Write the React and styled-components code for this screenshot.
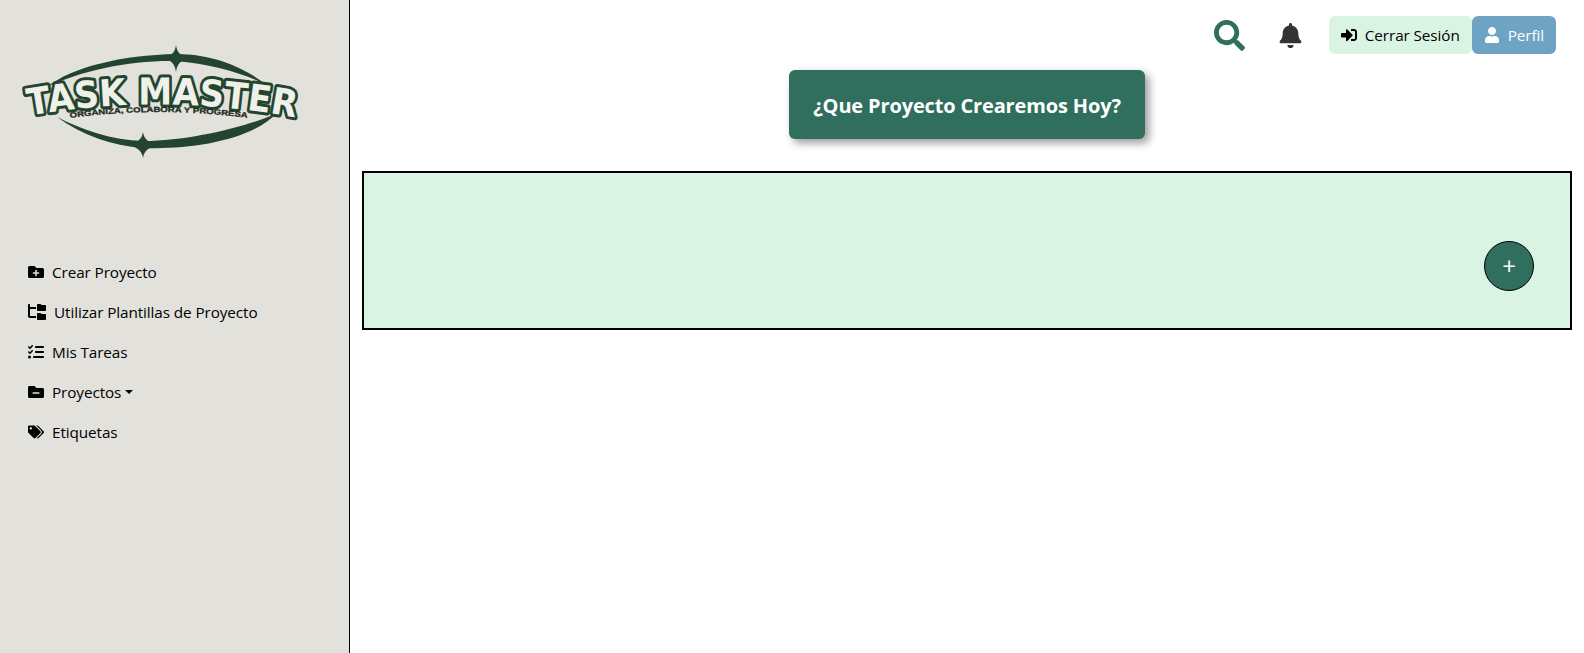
import React from 'react';
import styled, {createGlobalStyle} from 'styled-components';
import {FaFolderPlus, FaFolderMinus, FaTags, FaBell, FaUser, FaSearch, FaSignInAlt} from 'react-icons/fa';
import {FaFolderTree, FaListCheck} from 'react-icons/fa6';

const GlobalStyle = createGlobalStyle`
  html, body {
    margin: 0;
    padding: 0;
    height: 100%;
    background: #ffffff;
    font-family: 'Open Sans', 'Noto Sans', sans-serif;
    font-size: 15px;
  }
  #root {
    height: 100%;
  }
`;

const Page = styled.div`
  display: flex;
  height: 653px;
  overflow: hidden;
`;

const Sidebar = styled.aside`
  box-sizing: border-box;
  width: 350px;
  flex-shrink: 0;
  background: #e2e1dc;
  border-right: 1px solid #000;
  padding: 40px 0 0 28px;
`;

const LogoWrap = styled.div`
  margin-left: -6px;
  height: 212.5px;
`;

const Menu = styled.nav`
  display: flex;
  flex-direction: column;
`;

const MenuItem = styled.a`
  display: flex;
  align-items: center;
  gap: 8px;
  height: 39.8px;
  color: #000;
  font-size: 15.3px;
  letter-spacing: -0.1px;
`;

const Caret = styled.span`
  width: 0;
  height: 0;
  margin-left: -4px;
  border-top: 4.5px solid #000;
  border-left: 4.5px solid transparent;
  border-right: 4.5px solid transparent;
`;

const Main = styled.main`
  flex: 1;
  min-width: 0;
  display: flex;
  flex-direction: column;
`;

const Header = styled.header`
  display: flex;
  justify-content: flex-end;
  align-items: center;
  padding: 16px 28px 0 0;
  height: 38px;
`;

const IconSlot = styled.div`
  display: flex;
  align-items: center;
  color: ${props => props.color};
  margin-right: ${props => props.right}px;
`;

const HeaderButton = styled.button`
  display: flex;
  align-items: center;
  gap: 8px;
  height: 38px;
  box-sizing: border-box;
  padding: 0 12px;
  border: none;
  border-radius: 6px;
  background: ${props => props.bg};
  color: ${props => props.fg};
  font-family: inherit;
  font-size: 15.3px;
  letter-spacing: -0.1px;
`;

const TitleRow = styled.div`
  display: flex;
  justify-content: center;
  margin-top: 16px;
`;

const Title = styled.h1`
  box-sizing: border-box;
  width: 356px;
  height: 69px;
  margin: 0;
  padding-top: 2px;
  display: flex;
  align-items: center;
  justify-content: center;
  background: #306f5e;
  color: #fff;
  border-radius: 6px;
  font-size: 20px;
  font-weight: 700;
  letter-spacing: -0.15px;
  white-space: nowrap;
  box-shadow: 4px 4px 8px rgba(0, 0, 0, 0.4);
`;

const Panel = styled.section`
  box-sizing: border-box;
  height: 159px;
  margin: 32px 12px 0 12px;
  padding: 0 36px 37px 0;
  display: flex;
  justify-content: flex-end;
  align-items: flex-end;
  background: #daf4e4;
  border: 2px solid #000;
`;

const AddButton = styled.button`
  width: 50px;
  height: 50px;
  padding: 0;
  border-radius: 50%;
  border: 1px solid #000;
  background: #306f5e;
  color: #fff;
  font-family: inherit;
  font-size: 24px;
  line-height: 1;
`;

const Logo = () => (
  <svg width="290" height="125" viewBox="0 0 290 125" aria-label="Task Master">
    <g fill="#23452f">
      <path d="M25 47 C50 27 100 15 154 14 C195 14 225 30 245 45 C220 33 190 24 154 21 C110 20 60 30 25 47Z" />
      <path d="M35 77 C60 95 90 106 121 108 C170 110 230 100 255 73 C230 85 170 101 121 101 C90 100 60 90 35 77Z" />
      <path d="M154 5 C155 13 159 16 167 18 C159 20 155 24 154 32 C153 24 149 20 141 18 C149 16 153 13 154 5Z" />
      <path d="M121 92 C122 100 128 103 135 105 C128 107 122 110 121 118 C120 110 114 107 107 105 C114 103 120 100 121 92Z" />
    </g>
    <path id="logo-arc" d="M5 76 Q140 52 276 78" fill="none" />
    <text fontFamily="'DejaVu Sans', sans-serif" fontWeight="700" fontSize="37" fill="#f0f0ea" stroke="#23452f" strokeWidth="6" strokeLinejoin="round" paintOrder="stroke" textLength="268" lengthAdjust="spacingAndGlyphs">
      <textPath href="#logo-arc" startOffset="2">TASK MASTER</textPath>
    </text>
    <path id="logo-sub" d="M48 78 Q135 66 226 78" fill="none" />
    <text fontFamily="'Liberation Sans', sans-serif" fontWeight="700" fontSize="7.5" fill="#1d2a20" stroke="#1d2a20" strokeWidth="0.3" textLength="178" lengthAdjust="spacingAndGlyphs">
      <textPath href="#logo-sub" startOffset="0">ORGANIZA, COLABORA Y PROGRESA</textPath>
    </text>
  </svg>
);

const menuItems = [
  {icon: <FaFolderPlus size={16} />, label: 'Crear Proyecto'},
  {icon: <FaFolderTree size={18} />, label: 'Utilizar Plantillas de Proyecto'},
  {icon: <FaListCheck size={16} />, label: 'Mis Tareas'},
  {icon: <FaFolderMinus size={16} />, label: 'Proyectos', caret: true},
  {icon: <FaTags size={16} />, label: 'Etiquetas'},
];

export default function App() {
  return (
    <Page>
      <GlobalStyle />
      <Sidebar>
        <LogoWrap>
          <Logo />
        </LogoWrap>
        <Menu>
          {menuItems.map(item => (
            <MenuItem key={item.label}>
              {item.icon}
              {item.label}
              {item.caret ? <Caret /> : null}
            </MenuItem>
          ))}
        </Menu>
      </Sidebar>
      <Main>
        <Header>
          <IconSlot color="#306f5e" right={33}>
            <FaSearch size={31} />
          </IconSlot>
          <IconSlot color="#333333" right={26}>
            <FaBell size={25} />
          </IconSlot>
          <HeaderButton bg="#daf4e4" fg="#000">
            <FaSignInAlt size={16} />
            Cerrar Sesión
          </HeaderButton>
          <HeaderButton bg="#6fa3c4" fg="#fff">
            <FaUser size={16} />
            Perfil
          </HeaderButton>
        </Header>
        <TitleRow>
          <Title>¿Que Proyecto Crearemos Hoy?</Title>
        </TitleRow>
        <Panel>
          <AddButton>+</AddButton>
        </Panel>
      </Main>
    </Page>
  );
}
